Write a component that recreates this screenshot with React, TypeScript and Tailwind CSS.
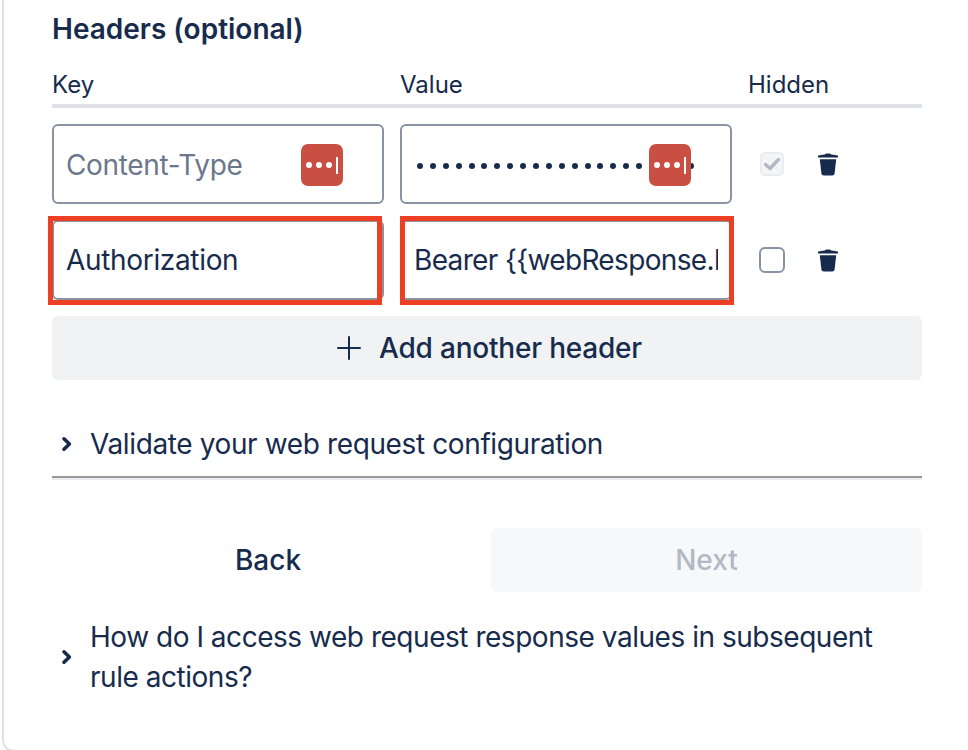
const navy = 'text-[#172b4d]'

function Trash() {
  return (
    <svg width="22" height="23" viewBox="0 0 22 24" className="text-[#172b4d]" fill="currentColor">
      <path d="M7.5 1.6C8.2.6 9.2.4 11 .4s2.8.2 3.500 1.200c2.700.2 5.500.6 7 1.400v1.800H.5V3c1.500-.8 4.300-1.200 7-1.400z" />
      <path d="M2.400 6.500h17.200l-1.700 14.700c-.2 1.500-1.100 2.300-2.600 2.300H6.700c-1.500 0-2.400-.8-2.600-2.300L2.400 6.500z" />
    </svg>
  )
}

function Chevron() {
  return (
    <svg width="12" height="16" viewBox="0 0 12 16" fill="none" className="text-[#172b4d]">
      <path d="M3 2.800 8.400 8 3 13.200" stroke="currentColor" strokeWidth="3.600" strokeLinecap="round" strokeLinejoin="round" />
    </svg>
  )
}

function PassBadge({ className }: { className: string }) {
  return (
    <div className={`absolute flex h-[42px] w-[42px] items-center justify-center gap-[4px] rounded-[7px] bg-[#c94f43] ${className}`}>
      <span className="h-[6px] w-[6px] rounded-full bg-white" />
      <span className="h-[6px] w-[6px] rounded-full bg-white" />
      <span className="h-[6px] w-[6px] rounded-full bg-white" />
      <span className="h-[17px] w-[2px] bg-white" />
    </div>
  )
}

function Dots() {
  return (
    <div className="mt-[3px] flex w-[284px] items-center gap-[6.900px] overflow-hidden">
      {Array.from({ length: 24 }).map((_, i) => (
        <span key={i} className="h-[6px] w-[6px] shrink-0 rounded-full bg-[#172b4d]" />
      ))}
    </div>
  )
}

export default function App() {
  return (
    <div className={`relative h-[750px] w-[968px] overflow-hidden bg-white font-['Inter',sans-serif] ${navy}`}>
      <div className="ml-[2px] h-[752px] rounded-bl-[12px] border-b-2 border-l-2 border-[#dfe1e6] pl-[48px] pr-[46px]">
        <h2 className="h-[58px] pt-[9px] text-[28px] font-semibold leading-[40px]">Headers (optional)</h2>

        <div className="grid h-[50px] grid-cols-[332px_332px_1fr] gap-x-[16px] border-b-4 border-[#dfe1e6] pt-[9px] text-[24px] leading-[36px]">
          <span>Key</span>
          <span>Value</span>
          <span>Hidden</span>
        </div>

        <div className="mt-[16px] grid grid-cols-[332px_332px_1fr] gap-x-[16px] gap-y-[16px] tracking-[-0.33px]">
          <div className="relative flex h-[80px] items-center rounded-[6px] border-2 border-[#8993a4] pl-[12px] pt-[2px] text-[28px] text-[#6b778c]">
            Content-Type
            <PassBadge className="left-[247px] top-[18px]" />
          </div>
          <div className="relative flex h-[80px] items-center rounded-[6px] border-2 border-[#8993a4] pl-[15px]">
            <Dots />
            <PassBadge className="left-[247px] top-[18px]" />
          </div>
          <div className="flex h-[80px] items-center">
            <div className="ml-[12px] flex h-[24px] w-[24px] items-center justify-center rounded-[5px] border-2 border-[#ebecf0] bg-[#f4f5f7]">
              <svg width="18" height="14" viewBox="0 0 18 14" fill="none">
                <path d="M2.500 7.500 7 11.500 15.500 2.500" stroke="#b3b9c4" strokeWidth="3.400" strokeLinecap="round" strokeLinejoin="round" />
              </svg>
            </div>
            <div className="ml-[33px]"><Trash /></div>
          </div>

          <div className="flex h-[80px] items-center rounded-[6px] border-2 border-[#8993a4] pl-[12px] text-[28px]">
            Authorization
          </div>
          <div className="flex h-[80px] items-center overflow-hidden rounded-[6px] border-2 border-[#8993a4] pl-[12px] pr-[12px] text-[28px] tracking-[-0.65px]">
            <span className="overflow-hidden whitespace-nowrap">{'Bearer {{webResponse.body.token}}'}</span>
          </div>
          <div className="flex h-[80px] items-center">
            <div className="ml-[11px] h-[26px] w-[26px] rounded-[6px] border-2 border-[#8993a4] bg-white" />
            <div className="ml-[32px]"><Trash /></div>
          </div>
        </div>

        <button className="mt-[16px] flex h-[64px] w-full items-center justify-center rounded-[6px] bg-[#f1f2f4] pl-[4px] text-[28px] font-medium tracking-[-0.2px]">
          <svg width="26" height="26" viewBox="0 0 26 26" className="mr-[17px]" fill="none">
            <path d="M13 2v22M2 13h22" stroke="#172b4d" strokeWidth="2" strokeLinecap="round" />
          </svg>
          Add another header
        </button>

        <div className="mt-[32px] flex h-[66px] items-center border-b-2 border-[#999999] text-[28px] tracking-[-0.38px] shadow-[0_2px_0_#ebecf0]">
          <span className="ml-[9px] mr-[17px] flex"><Chevron /></span>
          Validate your web request configuration
        </div>

        <div className="mt-[50px] grid grid-cols-[432px_431px] gap-x-[7px]">
          <button className="h-[64px] text-[28px] font-medium">Back</button>
          <button className="h-[64px] rounded-[6px] bg-[#f7f8f9] text-[28px] font-medium text-[#b3b9c4]">Next</button>
        </div>

        <div className="mt-[25px] flex items-center text-[28px] leading-[40px] tracking-[-0.47px]">
          <span className="ml-[9px] mr-[17px] flex shrink-0"><Chevron /></span>
          <p className="w-[800px]">How do I access web request response values in subsequent rule actions?</p>
        </div>
      </div>

      <div className="absolute left-[48px] top-[216px] h-[89px] w-[334px] border-[5px] border-[#ec3f23]" />
      <div className="absolute left-[400px] top-[216px] h-[89px] w-[334px] border-[5px] border-[#ec3f23]" />
    </div>
  )
}
